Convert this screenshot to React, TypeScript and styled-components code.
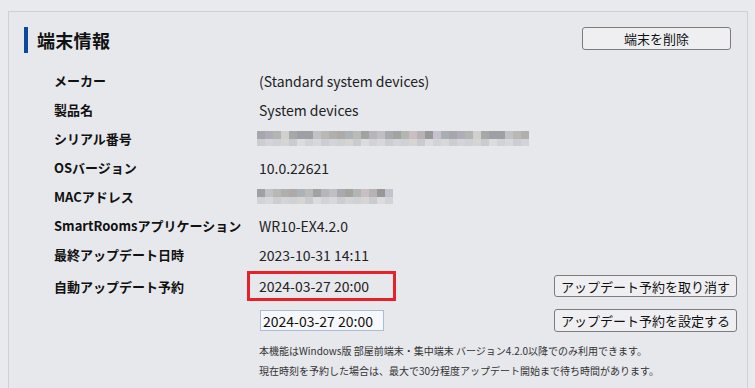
import React from 'react';
import styled, { createGlobalStyle } from 'styled-components';

const GlobalStyle = createGlobalStyle`
  html, body {
    margin: 0;
    padding: 0;
    background: #e9eaee;
  }
  body {
    font-family: "Noto Sans CJK JP", "Noto Sans", sans-serif;
    color: #1a1a1a;
    overflow: hidden;
  }
`;

const Page = styled.div`
  padding: 11px 7px 0 8px;
  height: 388px;
  box-sizing: border-box;
`;

const Panel = styled.section`
  border: 1px solid #cfd0d4;
  border-bottom: none;
  background: #e7e8ec;
  height: 100%;
  box-sizing: border-box;
  padding: 15px 16px 0 15px;
`;

const Header = styled.div`
  display: flex;
  justify-content: space-between;
  align-items: flex-start;
`;

const Title = styled.h2`
  margin: 0;
  display: flex;
  align-items: center;
  gap: 9px;
  height: 26px;
  font-size: 18px;
  font-weight: 700;
  letter-spacing: 0.3px;
  color: #111;

  &::before {
    content: '';
    width: 4px;
    height: 26px;
    background: #0b4a98;
  }
`;

const Button = styled.button<{ $width: number; $height?: number }>`
  width: ${(p) => p.$width}px;
  height: ${(p) => p.$height ?? 23}px;
  padding: 0;
  background: #efeff1;
  border: 1px solid #7c7c7c;
  border-radius: 3px;
  font-family: inherit;
  font-size: 13px;
  color: #111;
  line-height: 1;
`;

const InfoGrid = styled.dl`
  display: grid;
  grid-template-columns: 205px 1fr;
  grid-auto-rows: 29px;
  align-items: center;
  margin: 13px 0 0 30px;
`;

const Label = styled.dt`
  font-size: 13px;
  font-weight: 700;
  color: #111;
`;

const Value = styled.dd`
  margin: 0;
  font-size: 14px;
  color: #222;
  display: flex;
  align-items: center;
`;

const Mosaic = styled.div`
  display: flex;
  flex-direction: column;
  margin-left: -2px;
`;

const MosaicRow = styled.div<{ $h: number }>`
  display: flex;
  height: ${(p) => p.$h}px;
`;

const Cell = styled.span`
  width: 8px;
  height: 100%;
`;

const AutoGrid = styled.div`
  display: grid;
  grid-template-columns: 205px 1fr 183px;
  grid-template-rows: 30px 23px;
  row-gap: 8px;
  align-items: center;
  margin: 2px -6px 0 30px;
`;

const Highlighted = styled.div`
  position: relative;
  font-size: 14px;
  line-height: 20px;
  color: #222;
  justify-self: start;

  &::after {
    content: '';
    position: absolute;
    left: -12px;
    top: 50%;
    margin-top: -15px;
    width: 149px;
    height: 30px;
    border: 3px solid #e8202a;
    box-sizing: border-box;
  }
`;

const DateInput = styled.input`
  justify-self: start;
  width: 124px;
  height: 21px;
  box-sizing: border-box;
  padding: 0 2px;
  margin-left: 1px;
  border: 1px solid #a9bcd8;
  background: #f6f8fb;
  font-family: inherit;
  font-size: 14px;
  color: #111;
`;

const Notes = styled.div`
  margin: 9px 0 0 235px;
  font-size: 10px;
  line-height: 20px;
  color: #333;
`;

const palette = [
  '#a4a8ad', '#aeadb8', '#b7b5b9', '#c0bfc2', '#a7a8a6', '#9fa0a6', '#b3b5b0', '#c9bfc3',
  '#b9b8b4', '#afb0ab', '#c4c2cf', '#a8aeb1', '#babab7', '#a1a2a4', '#b2b6b3', '#d0d0d0',
  '#aba9b0', '#a3a49f', '#9fa0a3', '#c1c2c7', '#b8b2b7', '#999899', '#afa9aa', '#acb3b8',
];
const lightPalette = ['#d3d4d8', '#cfd1d5', '#d8d8db', '#cbcdd2', '#dcdcdf', '#d1d3d6', '#d6d5d4', '#c9cbd0'];

function cells(count: number, seed: number, light: boolean) {
  const out: string[] = [];
  let s = seed;
  for (let i = 0; i < count; i++) {
    s = (s * 9301 + 49297) % 233280;
    const list = light ? lightPalette : palette;
    out.push(list[s % list.length]);
  }
  return out;
}

const Blurred: React.FC<{ count: number; seed: number }> = ({ count, seed }) => (
  <Mosaic>
    <MosaicRow $h={8}>
      {cells(count, seed, false).map((c, i) => (
        <Cell key={i} style={{ background: c }} />
      ))}
    </MosaicRow>
    <MosaicRow $h={7}>
      {cells(count, seed + 7, true).map((c, i) => (
        <Cell key={i} style={{ background: c }} />
      ))}
    </MosaicRow>
  </Mosaic>
);

const rows: { label: string; value: React.ReactNode }[] = [
  { label: 'メーカー', value: '(Standard system devices)' },
  { label: '製品名', value: 'System devices' },
  { label: 'シリアル番号', value: <Blurred count={34} seed={11} /> },
  { label: 'OSバージョン', value: '10.0.22621' },
  { label: 'MACアドレス', value: <Blurred count={17} seed={5} /> },
  { label: 'SmartRoomsアプリケーション', value: 'WR10-EX4.2.0' },
  { label: '最終アップデート日時', value: '2023-10-31 14:11' },
];

export default function App() {
  return (
    <>
      <GlobalStyle />
      <Page>
        <Panel>
          <Header>
            <Title>端末情報</Title>
            <Button $width={149}>端末を削除</Button>
          </Header>

          <InfoGrid>
            {rows.map((r) => (
              <React.Fragment key={r.label}>
                <Label>{r.label}</Label>
                <Value>{r.value}</Value>
              </React.Fragment>
            ))}
          </InfoGrid>

          <AutoGrid>
            <Label>自動アップデート予約</Label>
            <Highlighted>2024-03-27 20:00</Highlighted>
            <Button $width={183} $height={22}>アップデート予約を取り消す</Button>
            <span />
            <DateInput defaultValue="2024-03-27 20:00" />
            <Button $width={183}>アップデート予約を設定する</Button>
          </AutoGrid>

          <Notes>
            本機能はWindows版 部屋前端末・集中端末 バージョン4.2.0以降でのみ利用できます。
            <br />
            現在時刻を予約した場合は、最大で30分程度アップデート開始まで待ち時間があります。
          </Notes>
        </Panel>
      </Page>
    </>
  );
}
